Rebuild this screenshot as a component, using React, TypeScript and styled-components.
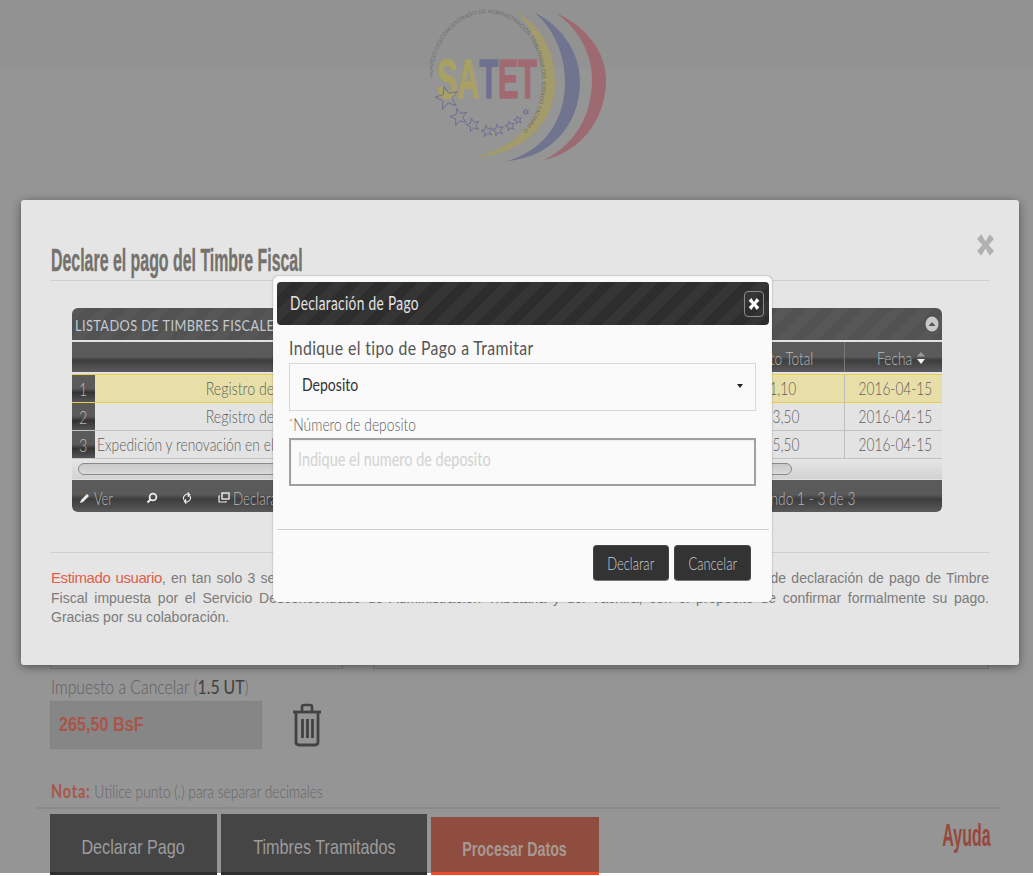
import React from "react";
import styled, { createGlobalStyle } from "styled-components";

const Global = createGlobalStyle`
  html, body { margin: 0; padding: 0; background: #fff; }
  * { box-sizing: border-box; }
`;

const arial = `"Liberation Sans", Arial, sans-serif`;
const lato = `Lato, "Noto Sans", sans-serif`;
const stripes = (a: string, b: string) =>
  `repeating-linear-gradient(135deg, ${a} 0, ${a} 10px, ${b} 10px, ${b} 20px)`;

const Squeeze = styled.span<{ $x: number; $from?: string }>`
  display: inline-block;
  flex: none;
  white-space: nowrap;
  transform: scaleX(${(p) => p.$x});
  transform-origin: ${(p) => p.$from ?? "left"} center;
`;

const Viewport = styled.div`
  position: relative;
  width: 1033px;
  height: 876px;
  overflow: hidden;
  background: #fff;
  font-family: ${lato};
`;

const Page = styled.div`
  height: 873px;
  background: linear-gradient(#929292 0, #929292 66px, #959595 72px, #959595 100%);
  display: flex;
  flex-direction: column;
  & > * { flex: none; }
`;

const Header = styled.header`
  height: 621px;
  padding-top: 8px;
  display: flex;
  justify-content: center;
`;

const LogoSvg = styled.svg`
  width: 180px;
  height: 156px;
  margin-left: 7px;
`;

const FormRow = styled.div`
  display: flex;
  gap: 30px;
  padding: 0 44px 0 50px;
`;

const GhostInput = styled.div<{ $w?: number }>`
  height: 48px;
  border: 1px solid #7f7f7f;
  background: #959595;
  ${(p) => (p.$w ? `width: ${p.$w}px;` : "flex: 1;")}
`;

const FieldLabel = styled.div`
  margin: 6px 0 0 51px;
  font-size: 19px;
  font-weight: 300;
  line-height: 24px;
  color: #5f5f5f;
  b { color: #3f3f3f; font-weight: 400; }
`;

const AmountRow = styled.div`
  display: flex;
  align-items: center;
  gap: 30px;
  margin: 2px 0 0 50px;
`;

const AmountBox = styled.div`
  width: 212px;
  height: 48px;
  background: #868686;
  border: 1px solid #828282;
  padding-left: 8px;
  display: flex;
  align-items: center;
  padding-bottom: 2px;
  font: 700 19.5px ${arial};
  color: #a8564a;
`;

const TrashSvg = styled.svg`
  width: 30px;
  height: 44px;
  color: #424242;
`;

const Note = styled.div`
  margin: 30px 0 0 51px;
  font-size: 18px;
  font-weight: 300;
  line-height: 24px;
  color: #666;
  b { color: #a8564a; font-weight: 700; font-size: 19px; letter-spacing: 1px; }
`;

const Rule = styled.div`
  height: 2px;
  margin: 4px 33px 0 36px;
  background: #8a8a8a;
`;

const TabBar = styled.div`
  display: flex;
  gap: 4px;
  align-items: flex-start;
  padding: 5px 42px 0 50px;
`;

const Tab = styled.div<{ $w: number }>`
  width: ${(p) => p.$w}px;
  height: 61px;
  flex: none;
  background: #454545;
  border-bottom: 3px solid #2f2f2f;
  color: #9c9c9c;
  font: 400 21px ${arial};
  display: flex;
  align-items: center;
  justify-content: center;
  padding-top: 7px;
`;

const ProcessTab = styled.div`
  width: 168px;
  height: 58px;
  flex: none;
  margin-top: 3px;
  background: #8f4d3f;
  border-bottom: 3px solid #f04a2a;
  color: #a79892;
  font: 700 19.5px ${arial};
  display: flex;
  align-items: center;
  justify-content: center;
  padding-top: 10px;
`;

const Help = styled.div`
  margin-left: auto;
  margin-top: 3px;
  font: 700 32px ${arial};
  color: #96483c;
`;

const OuterModal = styled.section`
  position: absolute;
  left: 21px;
  top: 200px;
  width: 998px;
  height: 465px;
  padding: 0 30px;
  background: #e5e5e5;
  border-radius: 3px;
  box-shadow: 0 2px 10px rgba(0, 0, 0, 0.45);
`;

const OuterTitle = styled.h2`
  margin: 0;
  padding-top: 41px;
  height: 81px;
  border-bottom: 1px solid #cfcfcf;
  font: 700 32px/38px ${arial};
  color: #75716d;
  -webkit-text-stroke: 0.4px #75716d;
`;

const OuterClose = styled.svg`
  position: absolute;
  right: 24px;
  top: 33px;
  width: 19px;
  height: 24px;
  color: #b1b1b1;
`;

const Grid = styled.div`
  width: 870px;
  height: 204px;
  margin: 27px 0 0 21px;
  border-radius: 6px;
  overflow: hidden;
  background: #e2e2e2;
  display: flex;
  flex-direction: column;
`;

const Caption = styled.div`
  height: 32px;
  flex: none;
  background: ${stripes("#575757", "#525252")};
  display: flex;
  align-items: center;
  justify-content: space-between;
  padding: 0 3px;
  color: #c5cbd0;
  font-size: 16px;
  letter-spacing: 0.5px;
`;

const Collapse = styled.svg`
  width: 14px;
  height: 16px;
  flex: none;
`;

const gridColumns = "23px 384px 1fr 132px 98px";

const Columns = styled.div`
  display: grid;
  flex: none;
  grid-template-columns: ${gridColumns};
  height: 30px;
  margin-top: 2px;
  background: linear-gradient(#5a5a5a 0, #5a5a5a 49%, #3d3d3d 60%, #5a5a5a 100%);
`;

const ColHead = styled.div<{ $edge?: boolean; $shift?: number }>`
  display: flex;
  align-items: center;
  justify-content: center;
  color: #b9b9b9;
  font-size: 17px;
  font-weight: 300;
  padding-top: 2px;
  padding-left: ${(p) => p.$shift ?? 0}px;
  ${(p) => p.$edge && "border-left: 1px solid #777;"}
`;

const SortIcon = styled.svg`
  width: 10px;
  height: 12px;
  flex: none;
`;

const Row = styled.div<{ $selected?: boolean }>`
  display: grid;
  flex: none;
  grid-template-columns: ${gridColumns};
  height: ${(p) => (p.$selected ? 29 : 28)}px;
  margin-top: ${(p) => (p.$selected ? 2 : 0)}px;
  background: ${(p) => (p.$selected ? "#e8dfa8" : "#e3e3e3")};
  border-top: ${(p) => (p.$selected ? "1px solid #e8cf4a" : "none")};
  border-bottom: 1px solid ${(p) => (p.$selected ? "#e8cf4a" : "#c2c2c2")};
`;

const NumCell = styled.div`
  background: linear-gradient(#5a5a5a 0, #5a5a5a 49%, #333 65%, #555 100%);
  color: #b9b9b9;
  font-size: 18px;
  font-weight: 300;
  display: flex;
  align-items: center;
  justify-content: center;
`;

const Cell = styled.div<{ $edge?: boolean }>`
  font-size: 18px;
  font-weight: 300;
  line-height: 27px;
  text-align: center;
  white-space: nowrap;
  overflow: hidden;
  padding: 0 2px;
  color: #5f5f5f;
  ${(p) => p.$edge && "border-left: 1px solid #bdbdbd;"}
`;

const ScrollArea = styled.div`
  height: 20px;
  flex: none;
  padding: 4px 6px 0;
  background: linear-gradient(#e6e6e6, #d2d2d2);
`;

const Thumb = styled.div`
  width: 714px;
  height: 12px;
  border: 1px solid #8a8a8a;
  border-radius: 6px;
  background: linear-gradient(#c9c9c9, #dadada);
`;

const Pager = styled.div`
  height: 32px;
  flex: none;
  margin-top: 1px;
  padding-top: 3px;
  background: linear-gradient(#5a5a5a 0, #5a5a5a 45%, #3d3d3d 60%, #5a5a5a 100%);
  display: flex;
  align-items: center;
  justify-content: space-between;
  color: #b7b7b7;
  font-size: 18px;
  font-weight: 300;
`;

const PagerBtn = styled.div<{ $w: number }>`
  width: ${(p) => p.$w}px;
  flex: none;
  display: flex;
  align-items: center;
  gap: 3px;
`;

const PagerGroup = styled.div`
  display: flex;
  padding-left: 7px;
`;

const PagerIcon = styled.svg`
  width: 12px;
  height: 12px;
  color: #ededed;
  flex: none;
`;

const PagerInfo = styled.div`
  margin-right: 87px;
  display: flex;
  justify-content: flex-end;
`;

const Message = styled.div`
  margin-top: 40px;
  border-top: 1px solid #cfcfcf;
  padding-top: 15px;
  font: 400 14px/19.5px ${arial};
  color: #7b7b7b;
`;

const MsgLine = styled.div<{ $last?: boolean }>`
  white-space: nowrap;
  text-align: justify;
  text-align-last: ${(p) => (p.$last ? "left" : "justify")};
  em { font-style: normal; color: #e0604a; font-size: 15px; letter-spacing: -0.4px; }
`;

const InnerModal = styled.section`
  position: absolute;
  left: 273px;
  top: 276px;
  width: 499px;
  height: 326px;
  background: #fafafa;
  border: 1px solid #f4f4f4;
  border-radius: 5px;
  box-shadow: 0 0 2px rgba(0, 0, 0, 0.35);
  padding: 5px 2px 0 3px;
`;

const InnerHead = styled.div`
  height: 43px;
  border-radius: 4px;
  background: ${stripes("#353535", "#2d2d2d")};
  display: flex;
  align-items: center;
  justify-content: space-between;
  padding: 0 5px 2px 13px;
  color: #e3e3e3;
  font-size: 18.5px;
  letter-spacing: 0.45px;
`;

const InnerClose = styled.div`
  width: 20px;
  height: 26px;
  flex: none;
  margin-top: 2px;
  border: 1px solid #8a8a8a;
  border-radius: 4px;
  display: flex;
  align-items: center;
  justify-content: center;
  svg { width: 12px; height: 14px; color: #fff; }
`;

const InnerBody = styled.div`
  padding: 10px 13px 0 12px;
  height: 205px;
  border-bottom: 1px solid #cfcfcf;
`;

const TypeLabel = styled.div`
  font-size: 20px;
  line-height: 24px;
  letter-spacing: 0.5px;
  color: #555;
`;

const SelectBox = styled.div`
  height: 48px;
  margin-top: 4px;
  border: 1.5px solid #d8d8d8;
  padding: 0 12px 6px;
  display: flex;
  align-items: center;
  justify-content: space-between;
  color: #333;
  font-size: 18px;
  overflow: hidden;
  i { width: 0; height: 0; flex: none; border: 3px solid transparent; border-top: 4px solid #222; margin-top: 6px; }
`;

const NumLabel = styled.div`
  margin-top: 1px;
  font-size: 18px;
  font-weight: 300;
  line-height: 22px;
  color: #5f5f5f;
  i { font-style: normal; color: #ef7a6a; font-size: 13px; vertical-align: 3px; }
`;

const TextBox = styled.div`
  height: 48px;
  margin-top: 3px;
  border: 2px solid #a0a0a0;
  box-shadow: inset 0 1px 2px rgba(0, 0, 0, 0.06);
  padding: 0 7px 7px;
  display: flex;
  align-items: center;
  color: #d2d2d2;
  font-size: 19px;
  overflow: hidden;
`;

const InnerFooter = styled.div`
  display: flex;
  justify-content: flex-end;
  gap: 5px;
  padding: 15px 18px 0 0;
`;

const DarkButton = styled.div<{ $w: number }>`
  width: ${(p) => p.$w}px;
  height: 36px;
  background: #333;
  border: 1px solid #444;
  border-bottom-color: #777;
  border-radius: 4px;
  color: #c7cfd6;
  font-size: 18px;
  font-weight: 300;
  display: flex;
  align-items: center;
  justify-content: center;
`;

const Star = ({ x, y, r }: { x: number; y: number; r: number }) => {
  const pts = Array.from({ length: 10 }, (_, i) => {
    const a = -Math.PI / 2 + (i * Math.PI) / 5 - 0.25;
    const q = i % 2 ? r * 0.42 : r;
    return `${(x + q * Math.cos(a)).toFixed(1)},${(y + q * Math.sin(a)).toFixed(1)}`;
  }).join(" ");
  return <polygon points={pts} fill="none" stroke="#6a6a90" strokeWidth="0.9" />;
};

const Logo = () => (
  <LogoSvg viewBox="430 8 180 156">
    <defs>
      <path id="ring" d="M 432 78 A 55 67 0 1 1 473 145" />
    </defs>
    <path d="M517 12 C545 30 555 55 555 83 C555 125 520 155 475 157 C515 148 543 120 543 83 C543 55 535 32 517 12 Z" fill="#a39b6c" />
    <path d="M534 12 C565 28 580 55 580 82 C580 125 550 158 507 161 C545 150 565 120 565 82 C565 55 555 30 534 12 Z" fill="#70748f" />
    <path d="M556 13 C590 28 606 55 606 80 C606 120 580 152 544 160 C575 145 592 115 592 80 C592 55 580 30 556 13 Z" fill="#9c6a70" />
    <text
      transform="translate(437 98) scale(0.545 1)"
      fontFamily="Liberation Sans, sans-serif"
      fontWeight="700"
      fontSize="56"
    >
      <tspan fill="#a8a064" stroke="#a8a064" strokeWidth="1.5">SA</tspan>
      <tspan fill="#6e7290" stroke="#6e7290" strokeWidth="1.5">T</tspan>
      <tspan fill="#a06a70" stroke="#a06a70" strokeWidth="1.5">ET</tspan>
    </text>
    <text fontFamily="Liberation Sans, sans-serif" fontSize="5.6" fill="#6c6c6c">
      <textPath href="#ring">SERVICIO DESCONCENTRADO DE ADMINISTRACIÓN TRIBUTARIA DEL ESTADO TÁCHIRA O</textPath>
    </text>
    <Star x={447} y={98} r={12} />
    <Star x={459} y={117} r={9} />
    <Star x={473} y={125} r={7} />
    <Star x={487} y={131} r={6} />
    <Star x={498} y={130} r={6} />
    <Star x={510} y={126} r={5} />
    <Star x={518} y={120} r={4} />
    <Star x={526} y={112} r={3} />
  </LogoSvg>
);

const X = () => (
  <path d="M1 5 L5 1 L9 7 L13 1 L17 5 L12 10 L17 15 L13 19 L9 13 L5 19 L1 15 L6 10 Z" fill="currentColor" />
);

const dates = "2016-04-15";

export default function App() {
  return (
    <Viewport>
      <Global />
      <Page>
        <Header>
          <Logo />
        </Header>
        <FormRow>
          <GhostInput $w={293} />
          <GhostInput />
        </FormRow>
        <FieldLabel>
          <Squeeze $x={0.83}>
            Impuesto a Cancelar (<b>1.5 UT</b>)
          </Squeeze>
        </FieldLabel>
        <AmountRow>
          <AmountBox>
            <Squeeze $x={0.83}>265,50 BsF</Squeeze>
          </AmountBox>
          <TrashSvg viewBox="0 0 30 44" fill="none" stroke="currentColor">
            <path d="M1 9 H29" strokeWidth="2.8" />
            <path d="M10 8 V4 Q10 2 12 2 H18 Q20 2 20 4 V8" strokeWidth="2.6" />
            <path d="M4 9 V39 Q4 42 7 42 H23 Q26 42 26 39 V9" strokeWidth="2.8" />
            <path d="M10.5 16 V35 M15.5 16 V35 M20.5 16 V35" strokeWidth="2.8" />
          </TrashSvg>
        </AmountRow>
        <Note>
          <Squeeze $x={0.765}>
            <b>Nota:</b> Utilice punto (.) para separar decimales
          </Squeeze>
        </Note>
        <Rule />
        <TabBar>
          <Tab $w={167}>
            <Squeeze $x={0.77} $from="center">Declarar Pago</Squeeze>
          </Tab>
          <Tab $w={206}>
            <Squeeze $x={0.77} $from="center">Timbres Tramitados</Squeeze>
          </Tab>
          <ProcessTab>
            <Squeeze $x={0.73} $from="center">Procesar Datos</Squeeze>
          </ProcessTab>
          <Help>
            <Squeeze $x={0.5} $from="right">Ayuda</Squeeze>
          </Help>
        </TabBar>
      </Page>
      <OuterModal>
        <OuterTitle>
          <Squeeze $x={0.497}>Declare el pago del Timbre Fiscal</Squeeze>
        </OuterTitle>
        <OuterClose viewBox="0 0 18 20" preserveAspectRatio="none">
          <X />
        </OuterClose>
        <Grid>
          <Caption>
            <Squeeze $x={0.8}>LISTADOS DE TIMBRES FISCALES</Squeeze>
            <Collapse viewBox="0 0 14 16">
              <ellipse cx="7" cy="8" rx="6.5" ry="7.5" fill="#c9c9c9" />
              <path d="M3.5 10 L7 6 L10.5 10 Z" fill="#555" />
            </Collapse>
          </Caption>
          <Columns>
            <ColHead />
            <ColHead />
            <ColHead />
            <ColHead>
              <Squeeze $x={0.8} $from="center">Monto Total</Squeeze>
            </ColHead>
            <ColHead $edge $shift={12}>
              <Squeeze $x={0.81} $from="center">Fecha</Squeeze>
              <SortIcon viewBox="0 0 10 12">
                <path d="M5 0 L9 4.5 H1 Z" fill="#999" />
                <path d="M5 12 L9 7 H1 Z" fill="#f2f2f2" />
              </SortIcon>
            </ColHead>
          </Columns>
          <Row $selected>
            <NumCell>
              <Squeeze $x={0.8} $from="center">1</Squeeze>
            </NumCell>
            <Cell>
              <Squeeze $x={0.79} $from="center">Registro de Firma Personal</Squeeze>
            </Cell>
            <Cell />
            <Cell $edge>
              <Squeeze $x={0.76} $from="center">91,10</Squeeze>
            </Cell>
            <Cell $edge>
              <Squeeze $x={0.76} $from="center">{dates}</Squeeze>
            </Cell>
          </Row>
          <Row>
            <NumCell>
              <Squeeze $x={0.8} $from="center">2</Squeeze>
            </NumCell>
            <Cell>
              <Squeeze $x={0.79} $from="center">Registro de Firma Personal</Squeeze>
            </Cell>
            <Cell />
            <Cell $edge>
              <Squeeze $x={0.76} $from="center">123,50</Squeeze>
            </Cell>
            <Cell $edge>
              <Squeeze $x={0.76} $from="center">{dates}</Squeeze>
            </Cell>
          </Row>
          <Row>
            <NumCell>
              <Squeeze $x={0.8} $from="center">3</Squeeze>
            </NumCell>
            <Cell>
              <Squeeze $x={0.77}>Expedición y renovación en el registro de contribuyentes</Squeeze>
            </Cell>
            <Cell />
            <Cell $edge>
              <Squeeze $x={0.76} $from="center">265,50</Squeeze>
            </Cell>
            <Cell $edge>
              <Squeeze $x={0.76} $from="center">{dates}</Squeeze>
            </Cell>
          </Row>
          <ScrollArea>
            <Thumb />
          </ScrollArea>
          <Pager>
            <PagerGroup>
              <PagerBtn $w={67}>
                <PagerIcon viewBox="0 0 12 12">
                  <path d="M1 11 L2 8 L8 2 L10 4 L4 10 Z" fill="currentColor" />
                </PagerIcon>
                <Squeeze $x={0.72}>Ver</Squeeze>
              </PagerBtn>
              <PagerBtn $w={35}>
                <PagerIcon viewBox="0 0 12 12" fill="none" stroke="currentColor">
                  <circle cx="7" cy="5" r="3.4" strokeWidth="1.8" />
                  <path d="M4.5 7.5 L1.5 10.5" strokeWidth="2.2" />
                </PagerIcon>
              </PagerBtn>
              <PagerBtn $w={37}>
                <PagerIcon viewBox="0 0 12 12" fill="none" stroke="currentColor">
                  <path d="M9 3 A 4 4 0 0 0 3 8 M3 9 A 4 4 0 0 0 9 4" strokeWidth="1.1" />
                  <path d="M7 0 V5 L9 3 Z M5 7 V12 L3 9 Z" fill="currentColor" strokeWidth="0.5" />
                </PagerIcon>
              </PagerBtn>
              <PagerBtn $w={80}>
                <PagerIcon viewBox="0 0 12 12" fill="none" stroke="currentColor">
                  <rect x="4" y="1" width="7" height="6" strokeWidth="1.4" />
                  <path d="M2 4 H1 V10 H8 V9" strokeWidth="1.2" />
                </PagerIcon>
                <Squeeze $x={0.74}>Declarar</Squeeze>
              </PagerBtn>
            </PagerGroup>
            <PagerInfo>
              <Squeeze $x={0.76} $from="right">Mostrando 1 - 3 de 3</Squeeze>
            </PagerInfo>
          </Pager>
        </Grid>
        <Message>
          <MsgLine>
            <em>Estimado usuario</em>, en tan solo 3 sencillos pasos usted podrá hoy dar fiel cumplimiento a toda la nueva iniciativa de declaración de pago de Timbre
          </MsgLine>
          <MsgLine>
            Fiscal impuesta por el Servicio Desconcentrado de Administración Tributaria y del Táchira, con el propósito de confirmar formalmente su pago.
          </MsgLine>
          <MsgLine $last>Gracias por su colaboración.</MsgLine>
        </Message>
      </OuterModal>
      <InnerModal>
        <InnerHead>
          <Squeeze $x={0.74}>Declaración de Pago</Squeeze>
          <InnerClose>
            <svg viewBox="0 0 18 20">
              <X />
            </svg>
          </InnerClose>
        </InnerHead>
        <InnerBody>
          <TypeLabel>
            <Squeeze $x={0.79}>Indique el tipo de Pago a Tramitar</Squeeze>
          </TypeLabel>
          <SelectBox>
            <Squeeze $x={0.78}>Deposito</Squeeze>
            <i />
          </SelectBox>
          <NumLabel>
            <Squeeze $x={0.77}>
              <i>*</i>Número de deposito
            </Squeeze>
          </NumLabel>
          <TextBox>
            <Squeeze $x={0.76}>Indique el numero de deposito</Squeeze>
          </TextBox>
        </InnerBody>
        <InnerFooter>
          <DarkButton $w={76}>
            <Squeeze $x={0.72} $from="center">Declarar</Squeeze>
          </DarkButton>
          <DarkButton $w={77}>
            <Squeeze $x={0.72} $from="center">Cancelar</Squeeze>
          </DarkButton>
        </InnerFooter>
      </InnerModal>
    </Viewport>
  );
}
